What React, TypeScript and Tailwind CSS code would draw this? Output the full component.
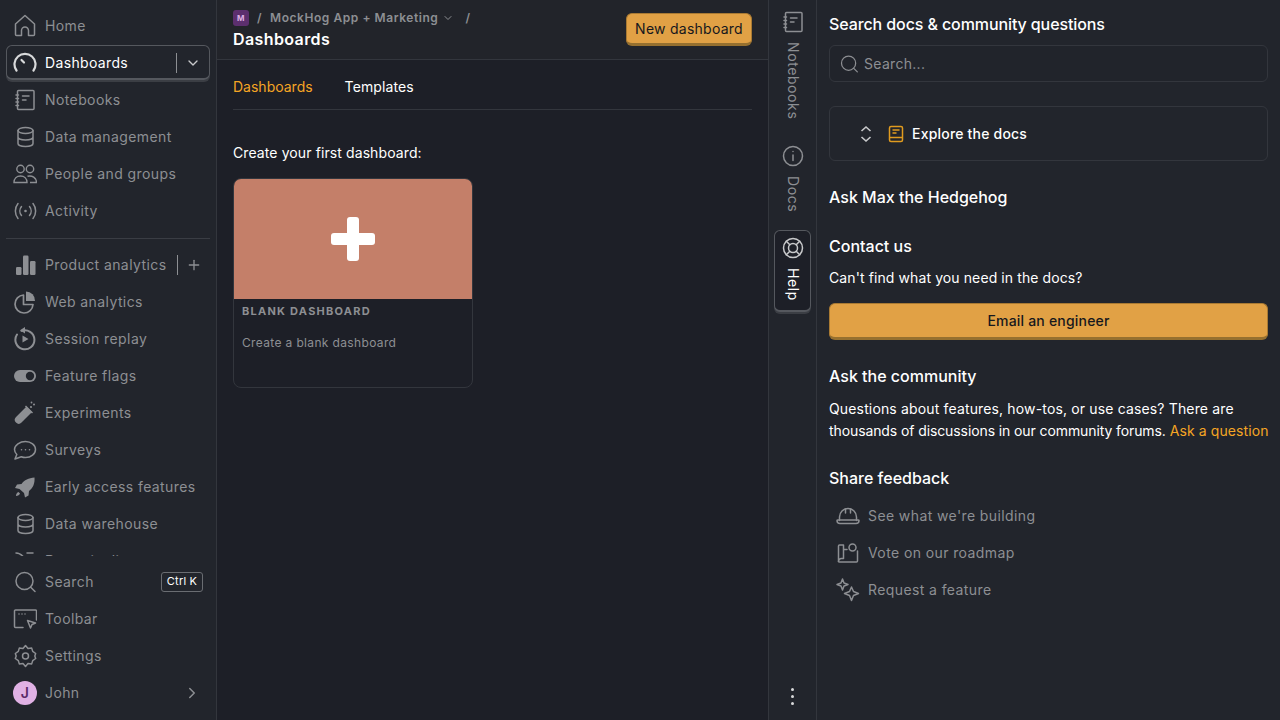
import { ReactNode } from 'react';
import { ChevronDown, ChevronRight, Plus } from 'lucide-react';

const Ico = ({ children, className = '' }: { children: ReactNode; className?: string }) => (
  <svg
    viewBox="0 0 24 24"
    fill="none"
    stroke="currentColor"
    strokeWidth="1.5"
    strokeLinecap="round"
    strokeLinejoin="round"
    className={`w-6 h-6 shrink-0 ${className}`}
  >
    {children}
  </svg>
);

const HomeIcon = () => (
  <Ico>
    <path d="M2.500 10 12 1.500l9.500 8.500v10.500a1 1 0 0 1-1 1H15.500v-5a3.500 3.500 0 0 0-7 0v5H3.500a1 1 0 0 1-1-1z" />
  </Ico>
);
const GaugeIcon = () => (
  <Ico>
    <path strokeWidth="2.200" d="M3.500 19.500a10.500 10.500 0 1 1 17 0" />
    <path strokeWidth="2.200" d="m8.500 9 2.500 2.500" />
  </Ico>
);
const NotebookIcon = () => (
  <Ico>
    <rect x="4.500" y="2.500" width="16.500" height="19" rx="1" />
    <path d="M9.500 8h6.500M9.500 12h3.500M3 7h2.500M3 10.500h2.500M3 14h2.500M3 17.500h2.500" />
  </Ico>
);
const DatabaseIcon = () => (
  <Ico>
    <ellipse cx="12.500" cy="5.500" rx="7.500" ry="3" />
    <path d="M5 5.500v13c0 1.700 3.400 3 7.500 3s7.500-1.300 7.500-3v-13M5 12c0 1.700 3.400 3 7.500 3s7.500-1.300 7.500-3" />
  </Ico>
);
const PeopleIcon = () => (
  <svg viewBox="0 0 24 20" fill="none" stroke="currentColor" strokeWidth="1.400" className="w-6 h-5 shrink-0">
    <circle cx="7.500" cy="5" r="3.700" />
    <circle cx="17" cy="5" r="3.700" />
    <path d="M1 18.500c0-4 2.800-6.500 6.500-6.500s6.500 2.500 6.500 6.500zM14.500 12.300c4.500-1.200 9 1.500 9 6.200H17" />
  </svg>
);
const ActivityIcon = () => (
  <Ico>
    <circle cx="12.500" cy="12" r="1.300" fill="currentColor" stroke="none" />
    <path d="M8.500 7.500a7 7 0 0 0 0 9M16.500 7.500a7 7 0 0 1 0 9M5 4.500a12 12 0 0 0 0 15M20 4.500a12 12 0 0 1 0 15" />
  </Ico>
);
const BarsIcon = () => (
  <svg viewBox="0 0 24 24" fill="currentColor" className="w-6 h-6 shrink-0">
    <rect x="3" y="14" width="5.500" height="8" rx="1.200" />
    <rect x="10" y="2.500" width="5.500" height="19.500" rx="1.200" />
    <rect x="17" y="8" width="5.500" height="14" rx="1.200" />
  </svg>
);
const PieIcon = () => (
  <Ico>
    <path strokeWidth="1.700" d="M10.500 5a9 9 0 1 0 9.500 9.500h-9.500z" />
    <path fill="currentColor" stroke="none" d="M13 1.500a9 9 0 0 1 9 9.500h-9z" />
  </Ico>
);
const ReplayIcon = () => (
  <Ico>
    <path strokeWidth="2" d="M8.500 3.900a9.500 9.500 0 1 1-4.500 3.600" />
    <path fill="currentColor" stroke="none" d="M12 0v6.500l-5-3.200zM9.500 8.500v7l6-3.500z" />
  </Ico>
);
const ToggleIcon = () => (
  <svg viewBox="0 0 24 24" className="w-6 h-6 shrink-0">
    <rect x="1" y="6" width="22" height="12" rx="6" fill="currentColor" />
    <circle cx="17" cy="12" r="4.200" fill="#22252c" />
  </svg>
);
const FlaskIcon = () => (
  <svg viewBox="0 0 24 24" className="w-6 h-6 shrink-0" fill="currentColor">
    <path d="M13.500 5.500 19 11 8.500 21.500a3.800 3.800 0 0 1-5.500-5.500z" />
    <path d="m12.500 5 7 7" stroke="currentColor" strokeWidth="1.500" />
    <circle cx="18" cy="6" r="1.100" />
    <circle cx="21" cy="3.500" r="1" />
    <circle cx="18.500" cy="1.500" r="0.900" />
  </svg>
);
const ChatIcon = () => (
  <Ico>
    <path d="M12.500 3.500c5.500 0 10 3.600 10 8s-4.500 8-10 8c-1.500 0-3-.3-4.200-.8L2 21l1.800-4.500C2.500 15.100 1.500 13.400 1.500 11.500c0-4.400 5.500-8 11-8z" />
    <path strokeWidth="1.600" d="M8.500 11.800h.01M12.500 11.800h.01M16.500 11.800h.01" />
  </Ico>
);
const RocketIcon = () => (
  <svg viewBox="0 0 24 24" fill="currentColor" className="w-6 h-6 shrink-0">
    <path d="M21.500 2.500c.5 6-1.500 10.500-5.500 13.500l-.5 4.500-3.500 2-1-4.500L6.500 14l-4.500-1 2-3.500 4.500-.5c3-4 7-6 13-6.500z" />
    <path d="M5.500 17c-1.500.5-2.500 2-2.500 4 2 0 3.500-1 4-2.500z" />
  </svg>
);
const PipelineIcon = () => (
  <Ico>
    <path d="M3 4c4 0 7 3 9 6l8 8M14 4l6 0M12 16l-6 6" />
    <path strokeWidth="2" d="m9 14 6-6 5 5-6 6z" />
  </Ico>
);
const SearchIcon = ({ className = '' }: { className?: string }) => (
  <Ico className={className}>
    <circle cx="11.500" cy="11" r="8.500" />
    <path d="m17.700 17.200 4.300 4.300" />
  </Ico>
);
const ToolbarIcon = () => (
  <Ico>
    <path d="M10 20.500H2.500a1 1 0 0 1-1-1V4a1 1 0 0 1 1-1h20a1 1 0 0 1 1 1V13" />
    <path d="M6 7h.01M9 7h.01M12 7h.01" />
    <path d="m14.500 13.500 8 2.500-3.500 1.500-1.500 3.500z" />
  </Ico>
);
const GearIcon = () => (
  <Ico>
    <circle cx="12.500" cy="12" r="3" />
    <path d="M12.500 1.500 15 4.500l3.700-.4 1 3.300 3 2.100-.9 2.500.9 2.500-3 2.100-1 3.300-3.700-.4-2.500 3-2.500-3-3.700.4-1-3.300-3-2.100.9-2.500-.9-2.500 3-2.100 1-3.300 3.700.4z" />
  </Ico>
);
const InfoIcon = () => (
  <Ico>
    <circle cx="12" cy="12" r="9.500" />
    <path d="M12 11v5.500M12 7.500h.01" />
  </Ico>
);
const LifebuoyIcon = () => (
  <Ico>
    <circle cx="12" cy="12" r="9.500" />
    <circle cx="12" cy="12" r="4.500" />
    <path d="m5.300 5.300 3.500 3.500M18.700 5.300l-3.500 3.500M5.300 18.700l3.500-3.500M18.700 18.700l-3.500-3.500" />
  </Ico>
);
const BookIcon = () => (
  <svg viewBox="0 0 16 18" fill="none" stroke="currentColor" strokeWidth="1.500" className="w-4 h-[18px] shrink-0">
    <rect x="1.500" y="1.500" width="13" height="15" rx="1.500" />
    <path d="M1.500 12.500h13M4.500 5h7M4.500 8h4" />
  </svg>
);
const UpDownIcon = () => (
  <svg viewBox="0 0 12 18" fill="none" stroke="currentColor" strokeWidth="1.600" className="w-3 h-[18px] shrink-0">
    <path d="m1.500 6 4.500-4 4.500 4M1.500 12l4.500 4 4.500-4" />
  </svg>
);
const HelmetIcon = () => (
  <Ico>
    <path d="M3.500 16.500V13a8.500 8.500 0 0 1 17 0v3.500" />
    <path d="M9.500 5V9M14.500 5V9" />
    <path d="M1 16.500c0-.5.500-.5 1-.5h20c.5 0 1 0 1 .5 0 2-1.500 3-3 3H4c-1.500 0-3-1-3-3z" />
  </Ico>
);
const RoadmapIcon = () => (
  <Ico>
    <path d="M7.500 17.500V4H3.500a1 1 0 0 0-1 1v15.500M2.500 20.500A3 3 0 0 1 5 17.500h2.500M7.500 8.500H11" />
    <circle cx="16.500" cy="6.500" r="3.500" />
    <path d="M21.500 10v10a1 1 0 0 1-1 1H3.500a1 1 0 0 1-1-.5" />
  </Ico>
);
const SparklesIcon = () => (
  <Ico>
    <path d="M6.500 1 8 5l4 1.500L8 8 6.500 12 5 8 1 6.500 5 5z" />
    <path d="m15.500 9 2 4.500 5 2-5 2-2 5-2-5-5-2 5-2z" />
  </Ico>
);
const PlusBlock = () => (
  <svg viewBox="0 0 44 44" fill="#fff" className="w-11 h-11">
    <rect x="16" y="0" width="12" height="44" rx="3" />
    <rect x="0" y="16" width="44" height="12" rx="3" />
  </svg>
);

const NavRow = ({
  icon,
  label,
  right,
}: {
  icon: ReactNode;
  label: string;
  right?: ReactNode;
}) => (
  <div className="h-[37px] shrink-0 flex items-center pl-[13px] pr-[13px] text-[#8d8f93] text-sm tracking-[0.4px]">
    <div className="w-6 flex justify-center">{icon}</div>
    <span className="ml-2 whitespace-nowrap flex-1">{label}</span>
    {right}
  </div>
);

const Sidebar = () => (
  <aside className="w-[217px] shrink-0 h-full flex flex-col bg-[#22252c] border-r border-[#33363d]">
    <div className="h-[556px] shrink-0 overflow-hidden pt-[7px]">
      <NavRow icon={<HomeIcon />} label="Home" />
      <div className="h-[37px] px-[6px] pt-px">
        <div className="h-[35px] flex items-center pt-px pl-[6px] pr-[8px] text-white text-sm tracking-[0.35px] rounded-md border border-[#55585e] border-b-2 shadow-[0_2px_0_#3b3e44]">
          <div className="w-6 flex justify-center text-[#d8d9da]">
            <GaugeIcon />
          </div>
          <span className="ml-2 flex-1">Dashboards</span>
          <div className="w-px h-5 bg-[#8d8f93] mr-[8px]" />
          <ChevronDown className="w-4 h-4 text-[#c8c9cb]" />
        </div>
      </div>
      <NavRow icon={<NotebookIcon />} label="Notebooks" />
      <NavRow icon={<DatabaseIcon />} label="Data management" />
      <NavRow icon={<PeopleIcon />} label="People and groups" />
      <NavRow icon={<ActivityIcon />} label="Activity" />
      <div className="mx-[6px] mt-[9px] mb-[7px] h-px bg-[#3a3d44]" />
      <NavRow
        icon={<BarsIcon />}
        label="Product analytics"
        right={
          <div className="flex items-center">
            <div className="w-px h-5 bg-[#8d8f93] mr-[8px]" />
            <Plus className="w-4 h-4 text-[#8d8f93] mr-px" />
          </div>
        }
      />
      <NavRow icon={<PieIcon />} label="Web analytics" />
      <NavRow icon={<ReplayIcon />} label="Session replay" />
      <NavRow icon={<ToggleIcon />} label="Feature flags" />
      <NavRow icon={<FlaskIcon />} label="Experiments" />
      <NavRow icon={<ChatIcon />} label="Surveys" />
      <NavRow icon={<RocketIcon />} label="Early access features" />
      <NavRow icon={<DatabaseIcon />} label="Data warehouse" />
      <NavRow icon={<PipelineIcon />} label="Data pipeline" />
    </div>
    <div className="flex-1 pt-[7px] bg-[#22252c]">
      <NavRow
        icon={<SearchIcon />}
        label="Search"
        right={
          <span className="h-5 w-[42px] flex items-center justify-center rounded-[3px] border border-[#6a6d72] text-white text-[11px] tracking-[0.2px] whitespace-nowrap">
            Ctrl K
          </span>
        }
      />
      <NavRow icon={<ToolbarIcon />} label="Toolbar" />
      <NavRow icon={<GearIcon />} label="Settings" />
      <NavRow
        icon={
          <span className="w-6 h-6 rounded-full bg-[#e0b1e4] text-[#5a2a68] text-sm font-semibold flex items-center justify-center">
            J
          </span>
        }
        label="John"
        right={<ChevronRight className="w-[18px] h-[18px] text-[#8d8f93] mr-[2px]" />}
      />
    </div>
  </aside>
);

const Main = () => (
  <main className="w-[551px] shrink-0 h-full bg-[#1d1f27]">
    <header className="h-[60px] bg-[#22242a] border-b border-[#33363d] pl-4 pr-4 flex justify-between">
      <div className="pt-[10px]">
        <div className="h-4 flex items-center text-xs font-semibold text-[#8d8f93] tracking-[0.55px]">
          <span className="w-4 h-4 rounded-[3px] bg-[#5c2f6e] text-[#dcb1e3] text-[8px] font-bold flex items-center justify-center">
            M
          </span>
          <span className="mx-2">/</span>
          <span>MockHog App + Marketing</span>
          <ChevronDown className="w-3 h-3 ml-[4px]" />
          <span className="ml-[11px]">/</span>
        </div>
        <h1 className="mt-[3px] text-white text-base font-semibold leading-[20px] tracking-[0.4px]">Dashboards</h1>
      </div>
      <button className="mt-[13px] h-[33px] w-[126px] rounded-md bg-[#e1a145] border border-[#a97a33] border-b-[3px] border-b-[#96702f] text-[#16181d] text-sm tracking-[0.25px]">
        New dashboard
      </button>
    </header>
    <div className="px-4">
      <div className="h-[50px] flex gap-8 items-center border-b border-[#33363d] text-sm pt-[4px]">
        <span className="text-[#f5a524]">Dashboards</span>
        <span className="text-white tracking-[0.1px]">Templates</span>
      </div>
      <p className="mt-[33px] text-sm leading-5 tracking-[0.1px] text-white">Create your first dashboard:</p>
      <div className="mt-[15px] w-[240px] h-[210px] rounded-lg border border-[#33363d] overflow-hidden">
        <div className="h-[120px] bg-[#c47f69] flex items-center justify-center">
          <PlusBlock />
        </div>
        <div className="px-2 pt-[5px] text-[11px] font-bold leading-[14px] tracking-[1.250px] text-[#8d8f93]">
          BLANK DASHBOARD
        </div>
        <div className="px-2 mt-[17px] text-xs leading-[16px] tracking-[0.35px] text-[#8d8f93]">
          Create a blank dashboard
        </div>
      </div>
    </div>
  </main>
);

const VerticalLabel = ({ text, className }: { text: string; className: string }) => (
  <span className={`[writing-mode:vertical-rl] text-sm tracking-[0.6px] leading-4 ${className}`}>{text}</span>
);

const SideTabs = () => (
  <div className="w-[49px] shrink-0 h-full bg-[#22252c] border-l border-r border-[#33363d] flex flex-col items-center">
    <div className="mt-[10px] flex flex-col items-center text-[#8d8f93]">
      <NotebookIcon />
      <VerticalLabel text="Notebooks" className="mt-[8px] text-[#8d8f93]" />
    </div>
    <div className="mt-[25px] flex flex-col items-center text-[#8d8f93]">
      <InfoIcon />
      <VerticalLabel text="Docs" className="mt-[8px] text-[#8d8f93]" />
    </div>
    <div className="mt-[17px] w-[37px] h-[82px] pt-[5px] rounded-md border border-[#55585e] border-b-2 shadow-[0_2px_0_#3b3e44] bg-[#1d1f27] flex flex-col items-center text-[#c8c9cb]">
      <LifebuoyIcon />
      <VerticalLabel text="Help" className="mt-[8px] text-white" />
    </div>
    <div className="mt-auto mb-[15px] flex flex-col gap-[4px]">
      <span className="w-[3px] h-[3px] rounded-full bg-[#d8d9da]" />
      <span className="w-[3px] h-[3px] rounded-full bg-[#d8d9da]" />
      <span className="w-[3px] h-[3px] rounded-full bg-[#d8d9da]" />
    </div>
  </div>
);

const LinkRow = ({ icon, label }: { icon: ReactNode; label: string }) => (
  <div className="h-[37px] flex items-center pl-[7px] text-[#8d8f93] text-sm tracking-[0.4px]">
    {icon}
    <span className="ml-2">{label}</span>
  </div>
);

const HelpPanel = () => (
  <section className="w-[463px] shrink-0 h-full bg-[#22252c] px-3 text-white">
    <h2 className="mt-[14px] text-base font-medium leading-[20px] tracking-[-0.1px]">
      Search docs &amp; community questions
    </h2>
    <div className="mt-[11px] h-[37px] rounded-md border border-[#33363d] bg-[#21242b] flex items-center pl-[9px] text-[#8d8f93] text-sm">
      <SearchIcon className="!w-[20px] !h-[20px]" />
      <span className="ml-[5px] tracking-[0.3px]">Search...</span>
    </div>
    <div className="mt-[24px] h-[55px] rounded-md border border-[#33363d] flex items-center pl-[30px]">
      <span className="text-[#c8c9cb]">
        <UpDownIcon />
      </span>
      <span className="ml-[16px] text-[#e09b1f]">
        <BookIcon />
      </span>
      <span className="ml-2 text-sm font-medium tracking-[0.2px]">Explore the docs</span>
    </div>
    <h2 className="mt-[26px] text-base font-medium leading-[20px]">Ask Max the Hedgehog</h2>
    <h2 className="mt-[29px] text-base font-medium leading-[20px]">Contact us</h2>
    <p className="mt-[12px] text-sm leading-5 tracking-[0.1px]">Can't find what you need in the docs?</p>
    <button className="mt-[15px] w-full h-[37px] rounded-md bg-[#e1a145] border border-[#a97a33] border-b-[3px] border-b-[#96702f] text-[#16181d] text-sm font-medium tracking-[0.2px]">
      Email an engineer
    </button>
    <h2 className="mt-[26px] text-base font-medium leading-[20px]">Ask the community</h2>
    <p className="mt-[12px] text-sm leading-[22px] whitespace-nowrap">
      <span className="tracking-[0.15px]">Questions about features, how-tos, or use cases? There are</span>
      <br />
      <span className="tracking-[-0.1px]">thousands of discussions in our community forums.</span>{' '}
      <span className="text-[#f5a524] tracking-[0.1px]">Ask a question</span>
    </p>
    <h2 className="mt-[26px] text-base font-medium leading-[20px]">Share feedback</h2>
    <div className="mt-[9px]">
      <LinkRow icon={<HelmetIcon />} label="See what we're building" />
      <LinkRow icon={<RoadmapIcon />} label="Vote on our roadmap" />
      <LinkRow icon={<SparklesIcon />} label="Request a feature" />
    </div>
  </section>
);

export default function App() {
  return (
    <div className="w-[1280px] h-[720px] overflow-hidden flex font-['Inter',sans-serif]">
      <Sidebar />
      <Main />
      <SideTabs />
      <HelpPanel />
    </div>
  );
}
